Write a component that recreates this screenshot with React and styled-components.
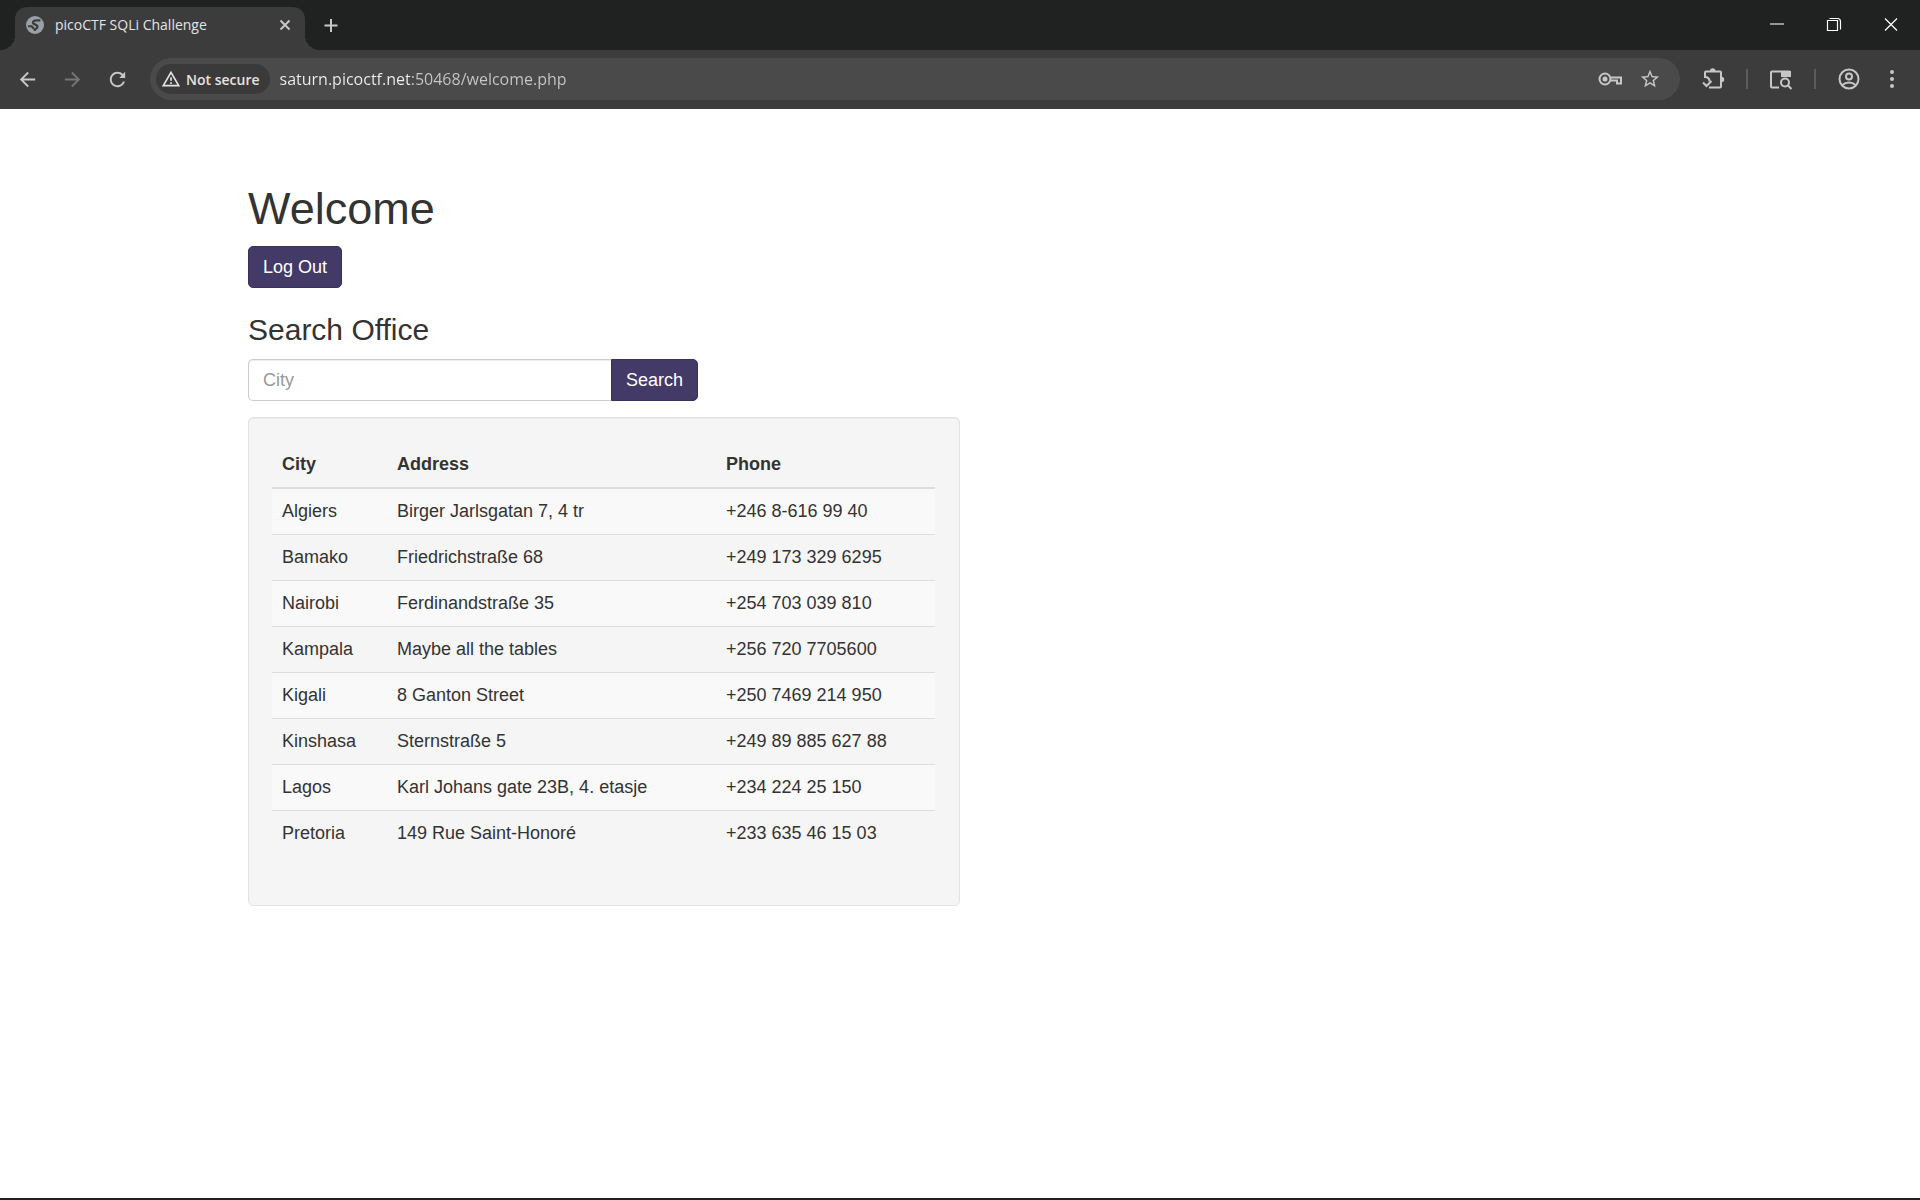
import React, { useState } from 'react';
import styled, { createGlobalStyle } from 'styled-components';

const UI = '"Open Sans", "Noto Sans", sans-serif';
const BODY = '"Liberation Sans", Arial, Helvetica, sans-serif';

const GlobalStyle = createGlobalStyle`
  *, *::before, *::after { box-sizing: border-box; }
  body { margin: 0; background: #fff; color: #333; font-family: ${BODY}; }
  button, input { font-family: inherit; margin: 0; }
`;

const Window = styled.div`
  display: flex;
  flex-direction: column;
  min-height: 100vh;
  border-bottom: 2px solid #202020;
`;

/* Browser frame */
const TabStrip = styled.header`
  display: flex;
  align-items: flex-end;
  height: 50px;
  padding-left: 15px;
  background: #202221;
  font-family: ${UI};
`;

const Tab = styled.div`
  position: relative;
  display: flex;
  align-items: center;
  width: 290px;
  height: 43px;
  padding: 0 10px 7px;
  border-radius: 12px 12px 0 0;
  background: #3c3c3c;
  color: #e3e3e3;

  &::before, &::after {
    content: '';
    position: absolute;
    bottom: 0;
    width: 15px;
    height: 15px;
  }
  &::before { right: 100%; background: radial-gradient(circle at 0 0, transparent 15px, #3c3c3c 15px); }
  &::after { left: 100%; background: radial-gradient(circle at 100% 0, transparent 15px, #3c3c3c 15px); }
`;

const TabTitle = styled.span`
  flex: 1;
  padding-left: 10px;
  font-size: 14px;
  line-height: 20px;
  white-space: nowrap;
`;

const IconButton = styled.button`
  display: inline-flex;
  align-items: center;
  justify-content: center;
  width: ${(p) => p.$w || 24}px;
  height: ${(p) => p.$h || 24}px;
  padding: 0;
  border: 0;
  background: none;
  color: ${(p) => (p.disabled ? '#757575' : '#c7c7c7')};
`;

const NewTab = styled.div`
  display: flex;
  align-self: stretch;
  align-items: center;
  padding-left: 14px;
`;

const WindowControls = styled.div`
  display: flex;
  align-self: stretch;
  margin-left: auto;
`;

const Toolbar = styled.div`
  display: flex;
  align-items: center;
  height: 59px;
  padding: 0 6px 1px 15px;
  background: #3c3c3c;
  font-family: ${UI};
`;

const NavButtons = styled.div`
  display: flex;
  gap: 21px;
  margin-right: 21px;
`;

const AddressBar = styled.div`
  display: flex;
  flex: 1;
  align-items: center;
  height: 42px;
  padding: 0 18px 0 6px;
  border-radius: 21px;
  background: #4a4a4a;
`;

const SecurityChip = styled.button`
  display: flex;
  align-items: center;
  gap: 5px;
  height: 30px;
  padding: 0 10px 0 5px;
  border: 0;
  border-radius: 15px;
  background: #3a3a3a;
  color: #e3e3e3;
  font-size: 14px;
  font-weight: 600;
`;

const UrlInput = styled.input`
  flex: 1;
  min-width: 0;
  height: 30px;
  padding: 0 0 0 10px;
  border: 0;
  outline: 0;
  background: linear-gradient(90deg, #f0f0f0 140px, #c7c7c7 140px);
  -webkit-background-clip: text;
  background-clip: text;
  color: transparent;
  font-size: 16px;
`;

const AddressActions = styled.div`
  display: flex;
  gap: 16px;
`;

const ToolbarActions = styled.div`
  display: flex;
  align-items: center;
  margin-left: 21px;
`;

const ProfileGroup = styled.div`
  display: flex;
  gap: 9px;
`;

const Divider = styled.span`
  width: 2px;
  height: 20px;
  margin: 0 21px;
  background: #5c5c5c;
`;

/* Page */
const Container = styled.main`
  width: 100%;
  max-width: 1462px;
  margin: 0 auto;
  padding: 75px 19px 0;
`;

const Title = styled.h1`
  margin: 0 0 12px;
  font-size: 45px;
  font-weight: 500;
  line-height: 50px;
`;

const Subtitle = styled.h2`
  margin: 25px 0 13px;
  font-size: 30px;
  font-weight: 400;
  line-height: 33px;
`;

const Button = styled.button`
  height: 42px;
  padding: 0 14px;
  border: 1px solid #392f59;
  border-radius: ${(p) => (p.$joined ? '0 5px 5px 0' : '5px')};
  background: #433a67;
  color: #fff;
  font-size: 18px;
  line-height: 25px;
`;

const SearchForm = styled.form`
  display: flex;
  width: 450px;
  max-width: 100%;
`;

const TextField = styled.input`
  flex: 1;
  min-width: 0;
  height: 42px;
  padding: 0 14px;
  border: 1px solid #ccc;
  border-right: 0;
  border-radius: 5px 0 0 5px;
  box-shadow: inset 0 1px 1px rgba(0, 0, 0, 0.075);
  color: #555;
  font-size: 18px;
  &::placeholder { color: #999; opacity: 1; }
`;

const Well = styled.section`
  width: 50%;
  margin-top: 16px;
  padding: 24px 24px 24px 23px;
  border: 1px solid #e3e3e3;
  border-radius: 5px;
  background: #f5f5f5;
  box-shadow: inset 0 1px 1px rgba(0, 0, 0, 0.05);
`;

const Table = styled.table`
  width: 100%;
  margin-bottom: 25px;
  border-collapse: separate;
  border-spacing: 0;
  table-layout: fixed;
  font-size: 18px;
  line-height: 25px;
  text-align: left;

  tbody tr:nth-child(odd) { background: #f9f9f9; }
  tbody tr + tr td { border-top: 1px solid #ddd; }
`;

const HeadCell = styled.th`
  width: ${(p) => p.$width};
  padding: 10px;
  border-bottom: 2px solid #ddd;
  font-weight: 700;
`;

const Cell = styled.td`
  padding: 10px;
`;

const Svg = ({ size = 24, box = 24, children, ...rest }) => (
  <svg width={size} height={size} viewBox={`0 0 ${box} ${box}`} fill="currentColor" aria-hidden="true" {...rest}>
    {children}
  </svg>
);

const line = { fill: 'none', stroke: 'currentColor', strokeWidth: 2 };

const offices = [
  ['Algiers', 'Birger Jarlsgatan 7, 4 tr', '+246 8-616 99 40'],
  ['Bamako', 'Friedrichstraße 68', '+249 173 329 6295'],
  ['Nairobi', 'Ferdinandstraße 35', '+254 703 039 810'],
  ['Kampala', 'Maybe all the tables', '+256 720 7705600'],
  ['Kigali', '8 Ganton Street', '+250 7469 214 950'],
  ['Kinshasa', 'Sternstraße 5', '+249 89 885 627 88'],
  ['Lagos', 'Karl Johans gate 23B, 4. etasje', '+234 224 25 150'],
  ['Pretoria', '149 Rue Saint-Honoré', '+233 635 46 15 03'],
];

function BrowserFrame() {
  const [url, setUrl] = useState('saturn.picoctf.net:50468/welcome.php');
  return (
    <>
      <TabStrip>
        <Tab>
          <Svg size={20}>
            <circle cx="12" cy="12" r="10.8" fill="#9aa0a6" />
            <g fill="none" stroke="#3c3c3c" strokeWidth="2.6" strokeLinejoin="round">
              <path d="M18.500 6.500h-4.500c-3 0-4.500 1-4.500 3s5.500 1.500 5.500 4.500c0 2.500-3 2-3.500 5" />
              <path d="M3.500 13.500h4.500l3 3.500" />
            </g>
          </Svg>
          <TabTitle>picoCTF SQLi Challenge</TabTitle>
          <IconButton aria-label="Close tab" $w={20} $h={20}>
            <Svg size={20} box={20}><path d="M5.500 5.500l9 9m0-9l-9 9" {...line} /></Svg>
          </IconButton>
        </Tab>
        <NewTab>
          <IconButton aria-label="New tab">
            <Svg><path d="M12 6v13M5.500 12.500h13" {...line} /></Svg>
          </IconButton>
        </NewTab>
        <WindowControls>
          <IconButton aria-label="Minimize" $w={57} $h={50}>
            <Svg><path d="M5 11h14" {...line} stroke="#959695" /></Svg>
          </IconButton>
          <IconButton aria-label="Restore" $w={57} $h={50}>
            <Svg color="#fff">
              <path d="M7.500 5.500h8a3 3 0 0 1 3 3v8M5.500 7.500h10v10h-10z" {...line} strokeWidth="1.2" />
            </Svg>
          </IconButton>
          <IconButton aria-label="Close" $w={58} $h={50}>
            <Svg color="#fff"><path d="M6 5.500l12 12m0-12l-12 12" {...line} strokeWidth="1.2" /></Svg>
          </IconButton>
        </WindowControls>
      </TabStrip>
      <Toolbar>
        <NavButtons>
          <IconButton aria-label="Back">
            <Svg size={23}><path d="M20 11H7.830l5.590-5.590L12 4l-8 8 8 8 1.410-1.410L7.830 13H20v-2z" /></Svg>
          </IconButton>
          <IconButton aria-label="Forward" disabled>
            <Svg size={23}><path d="M12 4l-1.410 1.410L16.170 11H4v2h12.170l-5.580 5.590L12 20l8-8z" /></Svg>
          </IconButton>
          <IconButton aria-label="Reload">
            <Svg size={23}>
              <path d="M17.650 6.350C16.200 4.900 14.210 4 12 4c-4.420 0-7.990 3.580-7.990 8s3.570 8 7.990 8c3.730 0 6.840-2.550 7.730-6h-2.080c-.82 2.330-3.040 4-5.650 4-3.310 0-6-2.690-6-6s2.690-6 6-6c1.660 0 3.140.69 4.220 1.780L14 10.500h6V4l-2.350 2.350z" />
            </Svg>
          </IconButton>
        </NavButtons>
        <AddressBar>
          <SecurityChip>
            <Svg size={20}>
              <path d="M12 5.990L19.530 19H4.470L12 5.990M12 2L1 21h22L12 2zm1 14h-2v2h2v-2zm0-6h-2v4h2v-4z" />
            </Svg>
            Not secure
          </SecurityChip>
          <UrlInput aria-label="Address" value={url} onChange={(e) => setUrl(e.target.value)} spellCheck={false} />
          <AddressActions>
            <IconButton aria-label="Passwords">
              <Svg>
                <circle cx="7" cy="12" r="5.500" {...line} />
                <circle cx="7" cy="12" r="2.500" />
                <path d="M12.500 10.500H23v6h-4v-3h-6.500" {...line} />
              </Svg>
            </IconButton>
            <IconButton aria-label="Bookmark this tab">
              <Svg size={22}>
                <path d="M22 9.240l-7.190-.62L12 2 9.190 8.630 2 9.240l5.460 4.730L5.820 21 12 17.270 18.180 21l-1.630-7.030L22 9.240zM12 15.400l-3.760 2.270 1-4.280-3.320-2.880 4.380-.38L12 6.100l1.710 4.040 4.380.38-3.320 2.880 1 4.280L12 15.400z" />
              </Svg>
            </IconButton>
          </AddressActions>
        </AddressBar>
        <ToolbarActions>
          <IconButton aria-label="Extensions">
            <Svg>
              <path d="M8 20.500h11a1 1 0 0 0 1-1V5.500a1 1 0 0 0-1-1H5a1 1 0 0 0-1 1v4.500c2.500 0 4.500 1.500 4.500 4.500" {...line} />
              <path d="M2 15.500l3.500 3.500 5-5" {...line} />
              <path d="M9 4a2.700 2.700 0 0 1 5.400 0zM20.500 9.800a2.700 2.700 0 0 1 0 5.400z" />
            </Svg>
          </IconButton>
          <Divider />
          <IconButton aria-label="Search tabs">
            <Svg>
              <path d="M10 20.500H3a1 1 0 0 1-1-1V5.500a1 1 0 0 1 1-1h17a1 1 0 0 1 1 1V10" {...line} />
              <path d="M12 4h10v6H12z" />
              <circle cx="16" cy="15.500" r="4" {...line} />
              <path d="M19 18.500l3.500 3.500" {...line} />
            </Svg>
          </IconButton>
          <Divider />
          <ProfileGroup>
            <IconButton aria-label="Profile">
              <Svg>
                <circle cx="12" cy="12" r="9.500" {...line} />
                <circle cx="12" cy="9.500" r="3" {...line} />
                <path d="M5.500 18c3.500-3.500 9.500-3.500 13 0" {...line} />
              </Svg>
            </IconButton>
            <IconButton aria-label="Menu" $w={44}>
              <Svg>
                <circle cx="12" cy="5" r="2" /><circle cx="12" cy="12" r="2" /><circle cx="12" cy="19" r="2" />
              </Svg>
            </IconButton>
          </ProfileGroup>
        </ToolbarActions>
      </Toolbar>
    </>
  );
}

export default function App() {
  return (
    <Window>
      <GlobalStyle />
      <BrowserFrame />
      <Container>
        <Title>Welcome</Title>
        <Button type="button">Log Out</Button>
        <Subtitle>Search Office</Subtitle>
        <SearchForm onSubmit={(e) => e.preventDefault()}>
          <TextField type="text" name="city" placeholder="City" aria-label="City" />
          <Button type="submit" $joined>Search</Button>
        </SearchForm>
        <Well>
          <Table>
            <thead>
              <tr>
                <HeadCell scope="col" $width="115px">City</HeadCell>
                <HeadCell scope="col" $width="329px">Address</HeadCell>
                <HeadCell scope="col">Phone</HeadCell>
              </tr>
            </thead>
            <tbody>
              {offices.map(([city, address, phone]) => (
                <tr key={city}>
                  <Cell>{city}</Cell>
                  <Cell>{address}</Cell>
                  <Cell>{phone}</Cell>
                </tr>
              ))}
            </tbody>
          </Table>
        </Well>
      </Container>
    </Window>
  );
}
